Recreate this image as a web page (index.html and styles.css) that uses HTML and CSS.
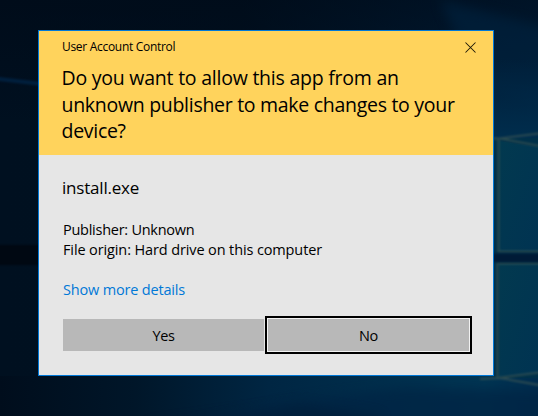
FILE: index.html
```
<!DOCTYPE html>
<html lang="en">
<head>
<meta charset="utf-8">
<title>User Account Control</title>
<link rel="stylesheet" href="styles.css">
</head>
<body>
<svg class="wallpaper" viewBox="0 0 538 416" preserveAspectRatio="none" aria-hidden="true">
  <defs>
    <linearGradient id="night" x1="0" y1="0" x2="1" y2="0">
      <stop offset="0" stop-color="#001020"/>
      <stop offset=".45" stop-color="#001121"/>
      <stop offset=".75" stop-color="#001930"/>
      <stop offset="1" stop-color="#001f3a"/>
    </linearGradient>
    <linearGradient id="top" x1="0" y1="0" x2="0" y2="1">
      <stop offset="0" stop-color="#000814" stop-opacity=".5"/>
      <stop offset=".3" stop-color="#000814" stop-opacity="0"/>
    </linearGradient>
    <linearGradient id="glow" x1="0" y1="0" x2="0" y2="1">
      <stop offset="0" stop-color="#002c4c" stop-opacity="0"/>
      <stop offset=".5" stop-color="#002c4c" stop-opacity=".6"/>
      <stop offset="1" stop-color="#002e4e"/>
    </linearGradient>
    <linearGradient id="floor" x1="0" y1="0" x2="1" y2="0">
      <stop offset="0" stop-color="#000d1c"/>
      <stop offset=".25" stop-color="#001629"/>
      <stop offset=".5" stop-color="#002643"/>
      <stop offset=".9" stop-color="#003553"/>
      <stop offset="1" stop-color="#002c4e"/>
    </linearGradient>
    <linearGradient id="pane" x1="0" y1="0" x2="1" y2="1">
      <stop offset="0" stop-color="#02394f"/>
      <stop offset="1" stop-color="#003352"/>
    </linearGradient>
    <filter id="soft" color-interpolation-filters="sRGB" filterUnits="userSpaceOnUse" x="-30" y="-30" width="600" height="480"><feGaussianBlur stdDeviation="6"/></filter>
    <filter id="edge" color-interpolation-filters="sRGB" filterUnits="userSpaceOnUse" x="-30" y="-30" width="600" height="480"><feGaussianBlur stdDeviation=".9"/></filter>
  </defs>
  <rect width="538" height="416" fill="url(#night)"/>
  <rect width="538" height="416" fill="url(#top)"/>
  <path d="M440 0L570 34V110L480 90Z" fill="#002340" opacity=".6" filter="url(#soft)"/>
  <rect x="490" y="60" width="48" height="82" fill="url(#glow)"/>
  <path d="M-5 78.500L42 84" stroke="#002446" stroke-width="4" opacity=".8" filter="url(#edge)"/>
  <rect x="-10" y="245" width="60" height="20" fill="#000812" filter="url(#edge)"/>
  <rect y="376" width="538" height="40" fill="url(#floor)"/>
  <path d="M120 440L300 401L400 388L560 390V440Z" fill="#002444" opacity=".75" filter="url(#soft)"/>
  <path d="M150 425L300 404L380 416V430H150Z" fill="#001b35" opacity=".5" filter="url(#soft)"/>
  <rect x="494" y="138" width="44" height="240" fill="#003049"/>
  <path d="M499 141L538 147V251H499Z" fill="url(#pane)"/>
  <path d="M499 264H538V373L499 377Z" fill="url(#pane)"/>
  <g fill="none" stroke="#3c5553" stroke-width="2" opacity=".72" filter="url(#edge)">
    <path d="M492 138.500H500L550 148M500 138.500L550 132M498.500 139V251.500H550"/>
    <path d="M550 263.500H497.500V378L550 371M480 379L500 378L550 387"/>
  </g>
  <rect x="490" y="253.500" width="66" height="8.500" fill="#001a36" filter="url(#edge)"/>
</svg>
<main class="dialog" role="dialog" aria-labelledby="question">
  <header class="banner">
    <div class="titlebar">
      <span class="caption">User Account Control</span>
      <button class="close" aria-label="Close">
        <svg width="11" height="11" viewBox="0 0 11 11"><path d="M.5 .5L10.500 10.500M10.500 .5L.5 10.500" stroke="#1d1808" stroke-width="1.050"/></svg>
      </button>
    </div>
    <h1 class="question" id="question"><span class="line opening">Do you want to allow this app from an</span> <span class="line">unknown publisher to make changes to your</span> <span class="line">device?</span></h1>
  </header>
  <section class="content">
    <h2 class="program">install.exe</h2>
    <div class="facts">
      <p>Publisher: Unknown</p>
      <p>File origin: Hard drive on this computer</p>
    </div>
    <a class="details">Show more details</a>
    <div class="actions">
      <button class="choice">Yes</button>
      <button class="choice focused">No</button>
    </div>
  </section>
</main>
</body>
</html>
```
FILE: styles.css
```
* { box-sizing: border-box; }
body {
  margin: 0;
  width: 538px;
  height: 416px;
  overflow: hidden;
  padding: 30px 44px 40px 38px;
  background: #00101f;
  color: #000;
  font-family: "Open Sans", "Noto Sans", sans-serif;
}
.wallpaper {
  position: absolute;
  inset: 0;
  width: 538px;
  height: 416px;
  z-index: -1;
}
h1, h2, p { margin: 0; font-weight: 400; }
button { border: 0; padding: 0; font: inherit; color: inherit; }
.dialog {
  width: 456px;
  height: 346px;
  border: 1px solid #0078d7;
  background: #e6e6e6;
}
.banner {
  height: 124px;
  padding: 7px 17px 0 23px;
  background: #ffd35c;
}
.titlebar {
  display: flex;
  justify-content: space-between;
  align-items: center;
  height: 18px;
}
.caption {
  font-size: 12px;
  line-height: 16px;
  letter-spacing: -.3px;
  white-space: nowrap;
}
.close { display: flex; background: none; }
.question {
  margin: 9px 0 0 -.5px;
  font-size: 19.500px;
  line-height: 26.500px;
  letter-spacing: -.29px;
}
.opening { letter-spacing: -.23px; }
.line { display: block; white-space: nowrap; width: max-content; }
.content { padding: 20px 21px 0 23px; }
.program {
  font-size: 17px;
  line-height: 26px;
  letter-spacing: -.2px;
  width: max-content;
}
.facts {
  margin: 19px 0 0 1px;
  font-size: 14.500px;
  line-height: 20px;
  letter-spacing: -.12px;
}
.facts p { width: max-content; }
.facts p:first-child { letter-spacing: -.26px; }
.details {
  display: block;
  width: max-content;
  margin: 20px 0 0 1px;
  font-size: 14.500px;
  line-height: 20px;
  letter-spacing: -.18px;
  color: #0078d7;
}
.actions {
  display: flex;
  align-items: center;
  gap: 1px;
  margin: 16px 0 0 1px;
}
.choice {
  display: flex;
  align-items: center;
  justify-content: center;
  width: 201px;
  height: 32px;
  background: #b8b8b8;
  font-size: 14.500px;
  letter-spacing: -.4px;
}
.focused {
  width: 207px;
  height: 38px;
  border: 2px solid #000;
  box-shadow: inset 0 0 0 1px #f2f2f2;
}
```
